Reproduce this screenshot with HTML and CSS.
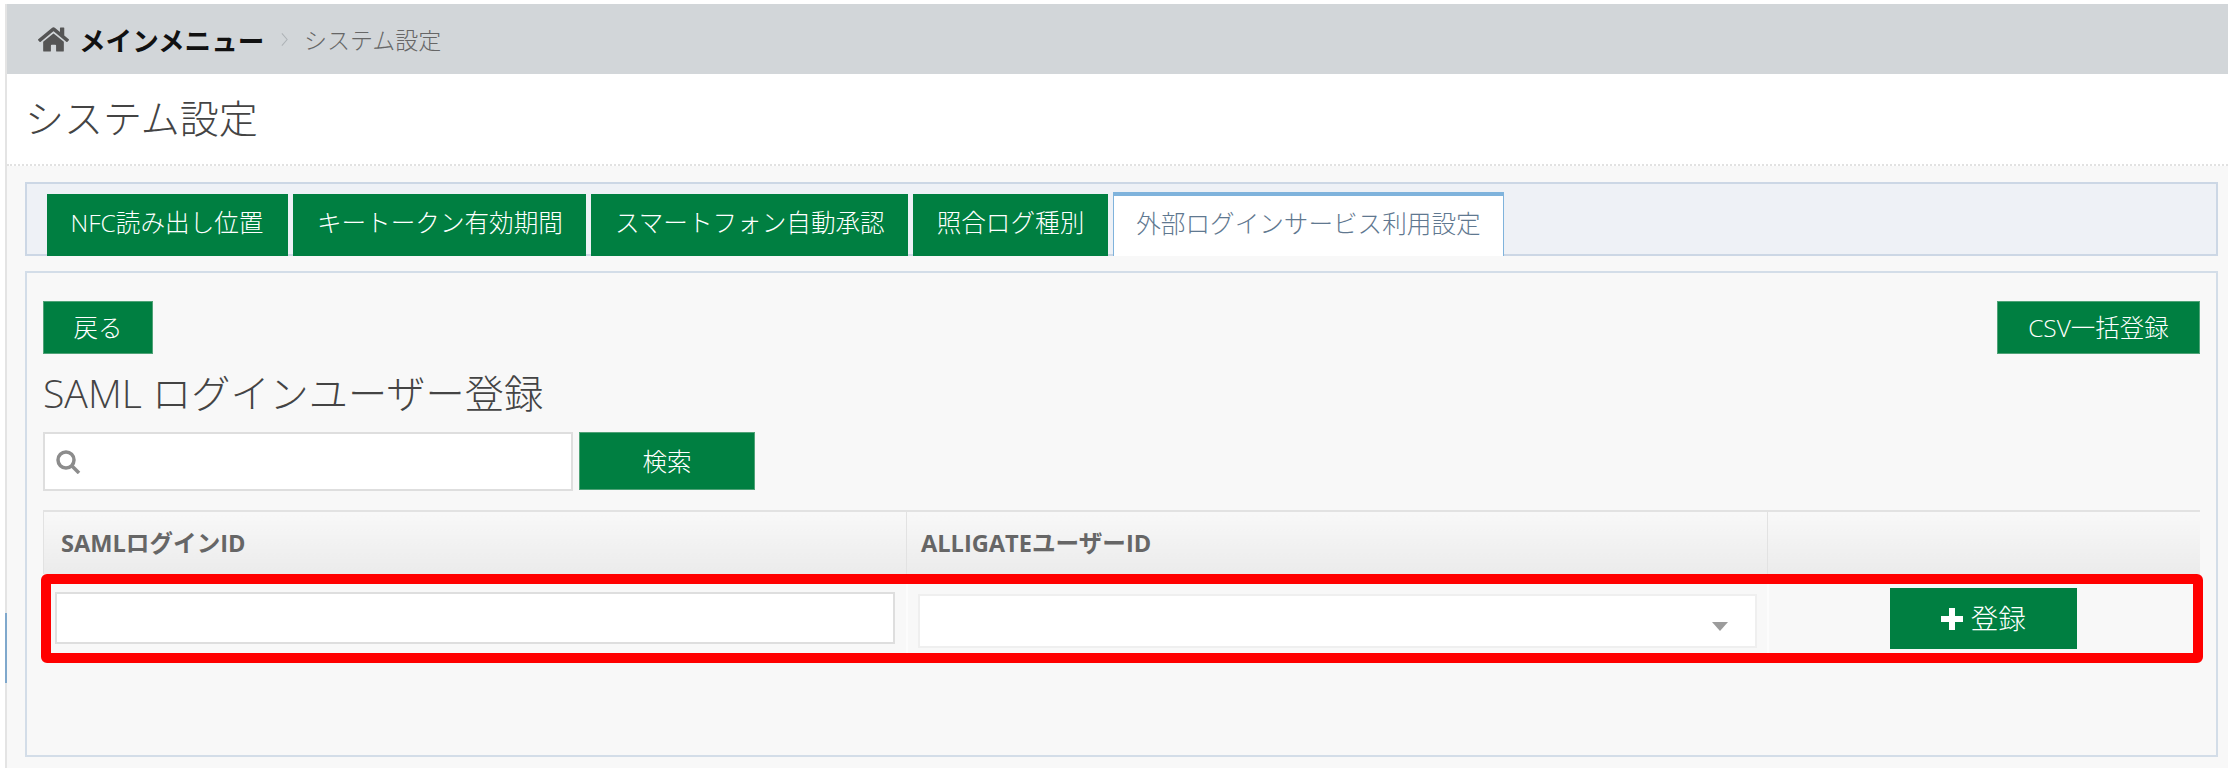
FILE: index.html
```html
<!DOCTYPE html>
<html lang="ja">
<head>
<meta charset="utf-8">
<title>システム設定</title>
<link rel="stylesheet" href="styles.css">
</head>
<body>
<div class="page">
  <span class="side-mark"></span>
  <nav class="crumbs">
    <svg class="home-icon" viewBox="0 32 576 448"><path d="M280.37 148.26L96 300.11V464a16 16 0 0 0 16 16l112.06-.29a16 16 0 0 0 15.92-16V368a16 16 0 0 1 16-16h64a16 16 0 0 1 16 16v95.64a16 16 0 0 0 16 16.05L464 480a16 16 0 0 0 16-16V300L295.67 148.26a12.19 12.19 0 0 0-15.3 0zM571.6 251.47L488 182.56V44.05a12 12 0 0 0-12-12h-56a12 12 0 0 0-12 12v72.61L318.47 43a48 48 0 0 0-61 0L4.34 251.47a12 12 0 0 0-1.6 16.9l25.5 31A12 12 0 0 0 45.15 301l235.22-193.74a12.19 12.19 0 0 1 15.3 0L530.9 301a12 12 0 0 0 16.9-1.6l25.5-31a12 12 0 0 0-1.7-16.93z"/></svg>
    <span class="crumb-main">メインメニュー</span>
    <svg class="crumb-sep" viewBox="0 0 8 16"><path d="M1 1l6 7-6 7"/></svg>
    <span class="crumb-sub">システム設定</span>
  </nav>
  <header class="title-bar"><h1 class="title">システム設定</h1></header>
  <main class="content">
    <ul class="tabs">
      <li class="tab">NFC読み出し位置</li>
      <li class="tab">キートークン有効期間</li>
      <li class="tab">スマートフォン自動承認</li>
      <li class="tab">照合ログ種別</li>
      <li class="tab tab-active">外部ログインサービス利用設定</li>
    </ul>
    <section class="panel">
      <div class="panel-actions">
        <button class="btn btn-back">戻る</button>
        <button class="btn btn-csv">CSV一括登録</button>
      </div>
      <h2 class="heading">SAML ログインユーザー登録</h2>
      <div class="search-row">
        <div class="search-box">
          <svg class="search-icon" viewBox="0 0 27 24"><circle cx="11" cy="10" r="8"/><path d="M17 16l7 7"/></svg>
        </div>
        <button class="btn btn-search">検索</button>
      </div>
      <div class="table-wrap">
        <table class="grid">
          <thead>
            <tr>
              <th class="col-id">SAMLログインID</th>
              <th class="col-user">ALLIGATEユーザーID</th>
              <th class="col-act"></th>
            </tr>
          </thead>
          <tbody>
            <tr>
              <td class="cell-id"><div class="text-field"></div></td>
              <td class="cell-user"><div class="select-field"><span class="select-arrow"></span></div></td>
              <td class="cell-act">
                <button class="btn btn-add">
                  <svg class="plus-icon" viewBox="0 0 22 22"><path d="M8 0h6v8h8v6h-8v8H8v-8H0V8h8z"/></svg>
                  <span>登録</span>
                </button>
              </td>
            </tr>
          </tbody>
        </table>
        <div class="highlight"></div>
      </div>
    </section>
  </main>
</div>
</body>
</html>
```

FILE: styles.css
```css
* { box-sizing: border-box; }
html, body { margin: 0; padding: 0; background: #fff; }
body {
  font-family: "Open Sans", "Noto Sans CJK JP", sans-serif;
  color: #444;
  height: 775px;
  overflow: hidden;
}
.page {
  position: relative;
  margin: 4px 7px 0 5px;
  height: 764px;
  border-left: 2px solid #e4e4e4;
  background: #f8f8f8;
}
.side-mark {
  position: absolute;
  left: -2px;
  top: 609px;
  width: 2px;
  height: 70px;
  background: #7fa8cc;
}
.crumbs {
  height: 70px;
  background: #d2d6d9;
  display: flex;
  align-items: center;
  padding-left: 31px;
}
.home-icon { width: 31px; height: 25px; fill: #555; margin-right: 10px; }
.crumb-main { font-size: 26.6px; font-weight: 700; color: #111; width: 202px; white-space: nowrap; }
.crumb-sep { width: 7px; height: 15px; fill: none; stroke: #aeb3b7; stroke-width: 1.2; margin-right: 16px; }
.crumb-sub { font-size: 23px; font-weight: 300; color: #666; }
.title-bar {
  height: 92px;
  background: #fff;
  border-bottom: 2px dotted #e2e2e2;
  padding-left: 18px;
}
.title {
  margin: 0;
  font-size: 39px;
  font-weight: 300;
  line-height: 88px;
  color: #444;
}
.content { padding: 16px 10px 0 18px; }
.tabs {
  list-style: none;
  margin: 0;
  height: 74px;
  padding: 10px 0 0 20px;
  display: flex;
  align-items: flex-end;
  gap: 5px;
  background: #eef1f6;
  border: 2px solid #ccd7e5;
}
.tab {
  height: 62px;
  margin-bottom: -2px;
  padding: 0 23.5px;
  background: #007f41;
  color: #fff;
  font-size: 24.6px;
  font-weight: 300;
  line-height: 58px;
  white-space: nowrap;
}
.tab:first-child { padding-right: 25px; }
.tab-active {
  height: 64px;
  padding: 0 22.5px;
  background: #fff;
  color: #5f7890;
  border: 1px solid #7fb3dc;
  border-top-width: 4px;
  border-bottom: 0;
  line-height: 56px;
}
.panel {
  margin-top: 15px;
  height: 486px;
  border: 2px solid #d3dde8;
  padding: 28px 16px 0;
  background: #f8f8f8;
}
.panel-actions { display: flex; justify-content: space-between; }
.btn {
  font-family: inherit;
  color: #fff;
  background: #007f41;
  border: 1px solid #4fa277;
  border-radius: 0;
  padding: 2px 0 0;
  font-size: 24.5px;
  font-weight: 300;
  line-height: 1;
  display: block;
}
.btn-back { width: 110px; height: 53px; }
.btn-csv { width: 203px; height: 53px; }
.heading {
  margin: 0;
  height: 78px;
  font-size: 39.2px;
  font-weight: 300;
  line-height: 78px;
  color: #444;
  white-space: nowrap;
}
.search-row { display: flex; gap: 6px; height: 59px; }
.search-box {
  width: 530px;
  height: 59px;
  background: #fff;
  border: 2px solid #dedede;
  display: flex;
  align-items: center;
  padding-left: 10px;
}
.search-icon { width: 27px; height: 24px; fill: none; stroke: #8c8c8c; stroke-width: 3.5; }
.btn-search { width: 176px; height: 58px; }
.table-wrap { position: relative; margin-top: 19px; }
.grid {
  border-collapse: collapse;
  table-layout: fixed;
  width: 100%;
}
.grid th {
  height: 63px;
  padding: 0 0 2px 16px;
  text-align: left;
  font-size: 23.6px;
  font-weight: 700;
  color: #666;
  background: linear-gradient(#f8f8f8, #ebebeb);
  border-top: 2px solid #e2e2e2;
  border-left: 1px solid #e2e2e2;
  white-space: nowrap;
}
.grid th.col-id { width: 863px; padding-left: 17px; }
.grid th.col-user { width: 861px; padding-left: 14px; }
.grid td { height: 88px; vertical-align: top; padding: 0; border-left: 2px solid #fcfcfc; }
.grid td.cell-id { border-left: 0; padding: 18px 11px 0 11px; }
.grid td.cell-user { padding: 20px 10px 0 10px; }
.grid td.cell-act { padding: 14px 2px 0 0; }
.text-field { height: 52px; background: #fff; border: 2px solid #dedede; }
.select-field { position: relative; height: 54px; background: #fff; border: 2px solid #efefef; }
.select-arrow {
  position: absolute;
  right: 27px;
  top: 26px;
  border-style: solid;
  border-width: 9px 8.5px 0;
  border-color: #9c9c9c transparent transparent;
}
.btn-add {
  width: 187px;
  height: 61px;
  margin: 0 auto;
  padding: 0;
  font-size: 27.5px;
  border-color: #007f41;
  display: flex;
  align-items: center;
  justify-content: center;
  gap: 8px;
}
.plus-icon { width: 22px; height: 22px; fill: #fff; }
.highlight {
  position: absolute;
  left: -2px;
  top: 64px;
  right: -3px;
  height: 89px;
  border: 10px solid #f00;
  border-radius: 6px;
  pointer-events: none;
}
```
